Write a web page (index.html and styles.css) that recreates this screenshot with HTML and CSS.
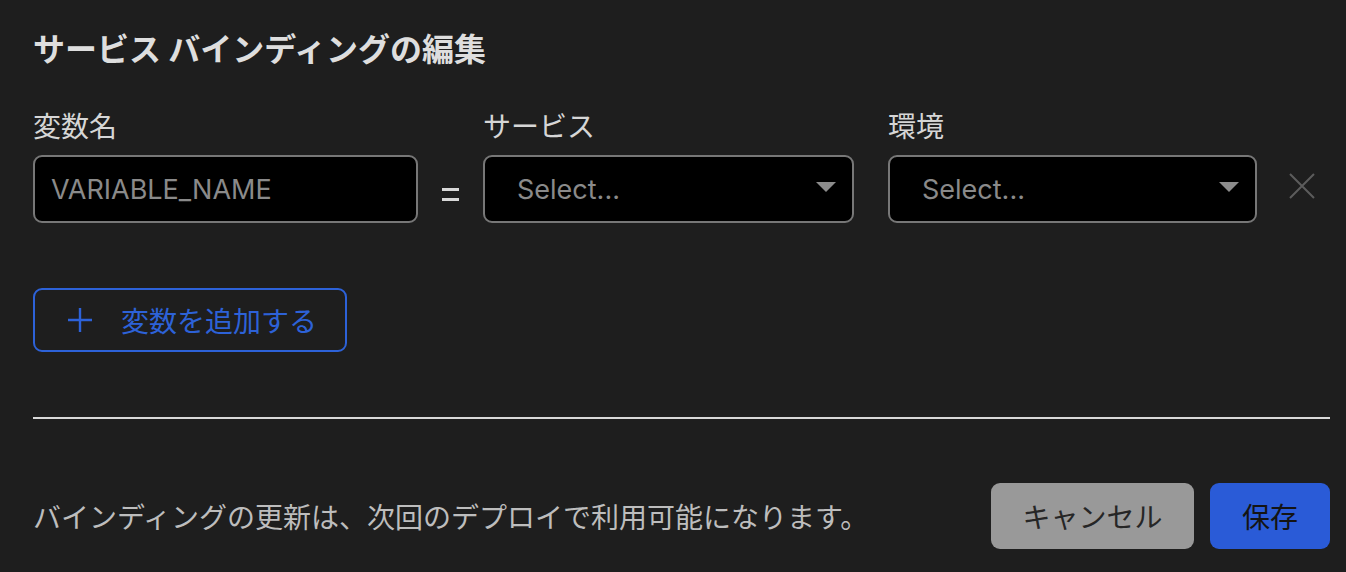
FILE: index.html
```html
<!DOCTYPE html>
<html lang="ja">
<head>
<meta charset="utf-8">
<link rel="stylesheet" href="styles.css">
</head>
<body>
<div class="dialog">
  <h1 class="title">サービス バインディングの編集</h1>
  <div class="fields">
    <div class="label">変数名</div>
    <div></div>
    <div class="label">サービス</div>
    <div></div>
    <div class="label">環境</div>
    <div></div>

    <div class="input"><span class="placeholder">VARIABLE_NAME</span></div>
    <div class="eq" aria-label="="><span class="eq-bars"></span></div>
    <div class="select">
      <span class="placeholder">Select...</span>
      <svg class="caret" width="20" height="10" viewBox="0 0 20 10"><path d="M0 0 H20 L10 10 Z" fill="#8c8c8c"/></svg>
    </div>
    <div></div>
    <div class="select">
      <span class="placeholder">Select...</span>
      <svg class="caret" width="20" height="10" viewBox="0 0 20 10"><path d="M0 0 H20 L10 10 Z" fill="#8c8c8c"/></svg>
    </div>
    <div class="remove-cell">
      <svg class="remove" width="26" height="26" viewBox="0 0 26 26"><path d="M1 1 L25 25 M25 1 L1 25" stroke="#5c5c5c" stroke-width="2" fill="none"/></svg>
    </div>
  </div>

  <button class="add">
    <svg class="plus" width="24" height="24" viewBox="0 0 24 24"><path d="M12 0 V24 M0 12 H24" stroke="#2d62d8" stroke-width="2.4" fill="none"/></svg>
    <span>変数を追加する</span>
  </button>

  <div class="divider"></div>

  <div class="footer">
    <p class="note">バインディングの更新は、次回のデプロイで利用可能になります。</p>
    <div class="actions">
      <button class="btn cancel">キャンセル</button>
      <button class="btn save">保存</button>
    </div>
  </div>
</div>
</body>
</html>
```

FILE: styles.css
```css
* { box-sizing: border-box; }
html, body {
  margin: 0;
  padding: 0;
  background: #1e1e1e;
  height: 100%;
}
body {
  font-family: Roboto, "Noto Sans CJK JP", sans-serif;
  color: #d4d4d4;
}
.dialog {
  padding: 28px 16px 0 33px;
}
.title {
  margin: 0;
  font-size: 32px;
  line-height: 38px;
  font-weight: 700;
  color: #dedede;
  font-family: "Noto Sans CJK JP", sans-serif;
}
.fields {
  margin-top: 42px;
  display: grid;
  grid-template-columns: 385px 65px 371px 34px 369px 1fr;
  grid-template-rows: 34px 68px;
  row-gap: 13px;
}
.label {
  font-family: "Noto Sans CJK JP", sans-serif;
  font-size: 28px;
  line-height: 34px;
  color: #d6d6d6;
}
.input, .select {
  background: #000;
  border: 2px solid #777;
  border-radius: 9px;
  display: flex;
  align-items: center;
}
.input { padding-left: 16px; }
.select { padding: 0 16px 0 32px; justify-content: space-between; }
.placeholder {
  font-size: 27px;
  color: #8a8a8a;
  font-family: Inter, Roboto, "Noto Sans CJK JP", sans-serif;
}
.caret { display: block; margin-top: -4px; }
.eq {
  display: flex;
  align-items: center;
  justify-content: center;
  padding-top: 11px;
  padding-right: 1px;
}
.eq-bars {
  display: block;
  width: 17px;
  height: 13px;
  border-top: 3px solid #d8d8d8;
  border-bottom: 3px solid #d8d8d8;
}
.remove-cell {
  display: flex;
  align-items: center;
  justify-content: flex-end;
  padding-right: 15px;
  padding-bottom: 7px;
}
.remove { display: block; }
.add {
  margin-top: 65px;
  width: 314px;
  height: 64px;
  background: transparent;
  border: 2px solid #2d62d8;
  border-radius: 9px;
  display: flex;
  align-items: center;
  padding: 0 0 0 33px;
  gap: 29px;
  color: #2d62d8;
  font-family: "Noto Sans CJK JP", sans-serif;
  font-size: 28px;
  line-height: 34px;
  cursor: pointer;
}
.plus { display: block; }
.divider {
  margin-top: 65px;
  height: 2px;
  background: #d9d9d9;
}
.footer {
  margin-top: 64px;
  display: flex;
  align-items: center;
  justify-content: space-between;
}
.note {
  margin: 0;
  font-family: "Noto Sans CJK JP", sans-serif;
  font-size: 28px;
  line-height: 34px;
  color: #bdbdbd;
}
.actions {
  display: flex;
  gap: 16px;
}
.btn {
  height: 66px;
  border: none;
  border-radius: 9px;
  font-family: "Noto Sans CJK JP", sans-serif;
  font-size: 28px;
  line-height: 34px;
  padding: 0;
  cursor: pointer;
}
.cancel {
  width: 203px;
  background: #999999;
  color: #262626;
}
.save {
  width: 120px;
  background: #2a5bd7;
  color: #141414;
}
```
